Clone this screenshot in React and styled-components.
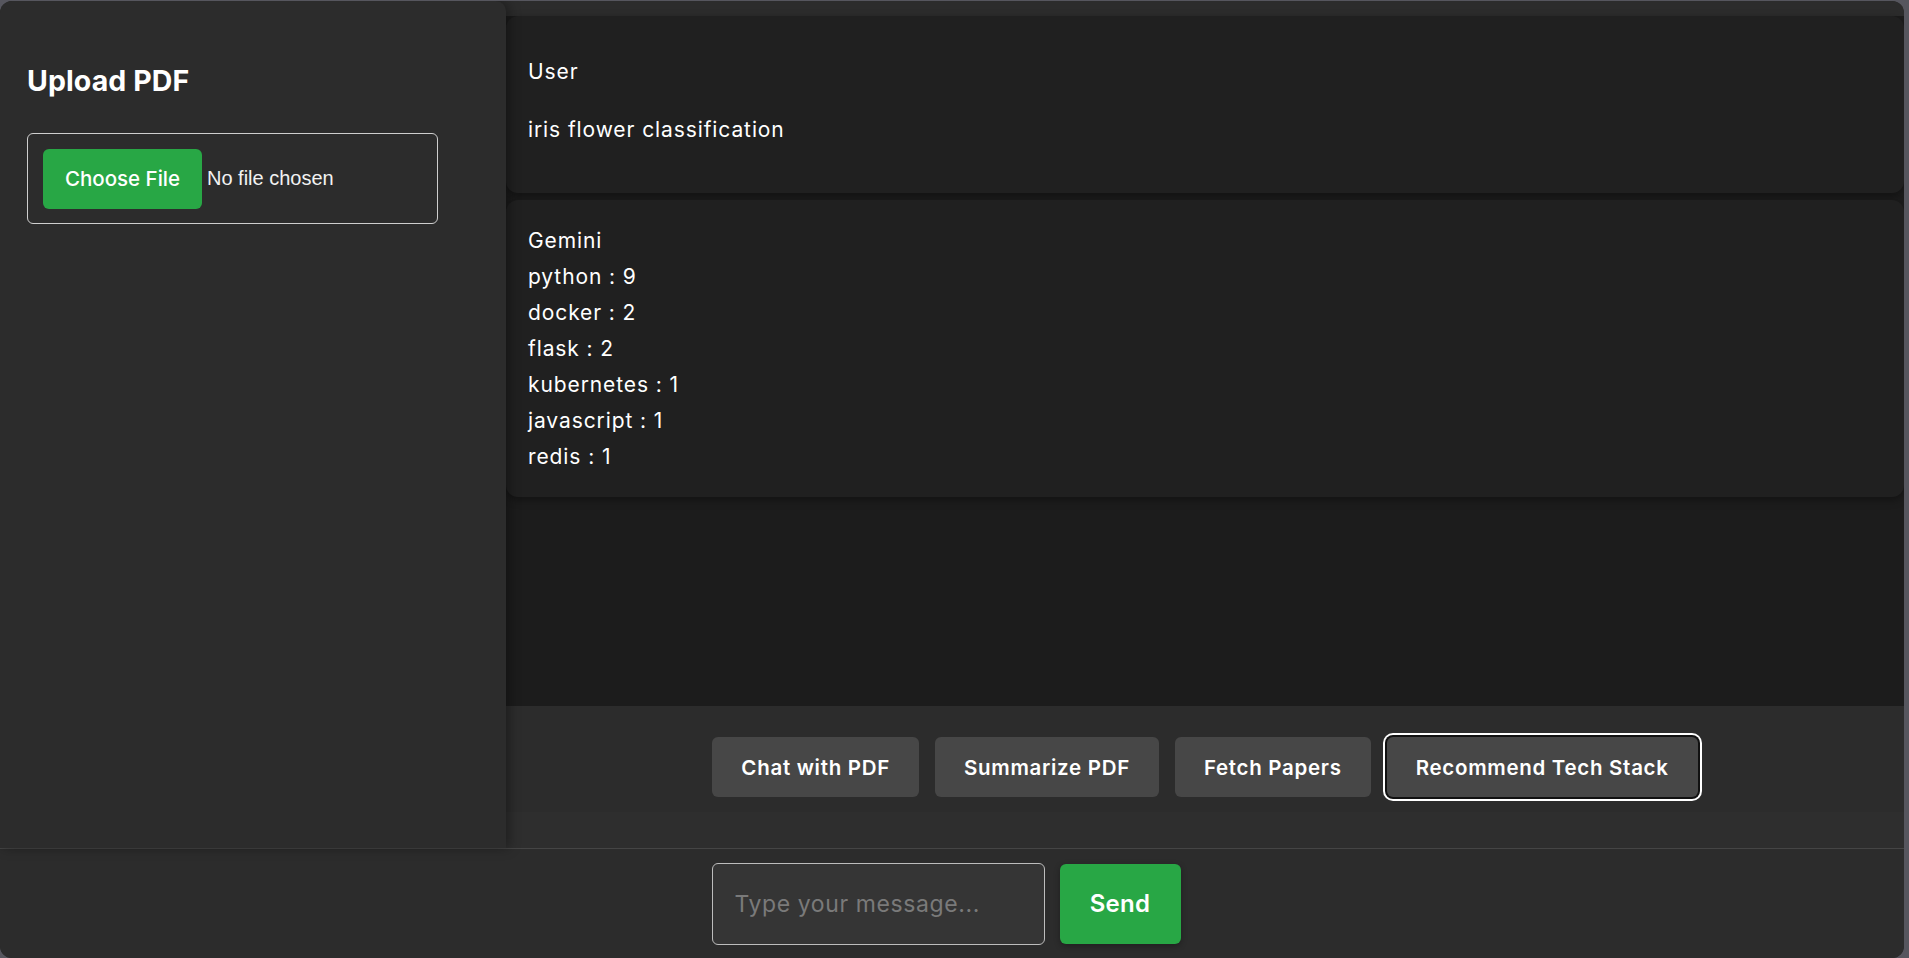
import React from 'react';
import styled, {createGlobalStyle} from 'styled-components';

const GlobalStyle = createGlobalStyle`
  html, body {
    margin: 0;
    padding: 0;
    background: #56565e;
  }
  body {
    font-family: 'Inter', 'Noto Sans', sans-serif;
    color: #fff;
  }
  * { box-sizing: border-box; }
`;

const Frame = styled.div`
  width: 1904px;
  height: 957px;
  margin-top: 1px;
  background: #2c2c2c;
  border-radius: 12px;
  overflow: hidden;
  display: flex;
  flex-direction: column;
`;

const Top = styled.div`
  flex: 1;
  display: flex;
  min-height: 0;
`;

const Sidebar = styled.aside`
  width: 506px;
  flex-shrink: 0;
  background: #2c2c2c;
  padding: 63px 27px;
  box-shadow: 3px 0 12px rgba(0, 0, 0, 0.35);
  border-top-right-radius: 10px;
  position: relative;
  z-index: 1;
`;

const Heading = styled.h2`
  margin: 0 0 35px;
  font-size: 28.5px;
  line-height: 34px;
  font-weight: 700;
  letter-spacing: 0.1px;
`;

const FileBox = styled.div`
  width: 411px;
  height: 91px;
  border: 1px solid #cfcfcf;
  border-radius: 6px;
  padding: 15px;
  display: flex;
  align-items: center;
  gap: 5px;
`;

const ChooseButton = styled.button`
  height: 60px;
  width: 159px;
  border: none;
  border-radius: 6px;
  background: #28a745;
  color: #fff;
  font-family: 'Inter', sans-serif;
  font-size: 20.5px;
  font-weight: 500;
`;

const FileName = styled.span`
  font-family: 'Liberation Sans', Arial, sans-serif;
  font-size: 20px;
  color: #f2f2f2;
`;

const Main = styled.main`
  flex: 1;
  display: flex;
  flex-direction: column;
  padding-top: 15px;
  background: #2c2c2c;
`;

const ChatArea = styled.section`
  height: 690px;
  background: #1c1c1c;
  display: flex;
  flex-direction: column;
  gap: 7px;
`;

const Card = styled.div`
  background: #202020;
  border-radius: 12px;
  box-shadow: 0 3px 8px rgba(0, 0, 0, 0.35);
  padding: ${p => p.$pad};
  font-size: 21px;
  letter-spacing: 0.9px;
  line-height: 36px;
`;

const Line = styled.div`
  margin-top: ${p => p.$gap || 0}px;
`;

const ActionBar = styled.div`
  height: 106px;
  background: #2c2c2c;
  display: flex;
  align-items: center;
  justify-content: center;
  gap: 16px;
  padding: 16px 0 0 0;
`;

const ActionButton = styled.button`
  height: 60px;
  padding: 0 29px;
  border: none;
  border-radius: 6px;
  background: #474747;
  color: #fff;
  font-family: 'Inter', sans-serif;
  font-size: 20.5px;
  letter-spacing: 0.7px;
  font-weight: 600;
  box-shadow: ${p => (p.$active ? '0 0 0 2px #111, 0 0 0 4px #fff' : 'none')};
`;

const Filler = styled.div`
  flex: 1;
  background: #2e2e2e;
`;

const InputBar = styled.footer`
  height: 110px;
  flex-shrink: 0;
  border-top: 1px solid #454545;
  background: #2c2c2c;
  display: flex;
  align-items: center;
  justify-content: center;
  gap: 15px;
  padding-right: 12px;
`;

const MessageInput = styled.input`
  width: 333px;
  height: 82px;
  background: #353535;
  border: 1px solid #bdbdbd;
  border-radius: 6px;
  padding: 0 22px;
  color: #fff;
  font-family: 'Inter', sans-serif;
  font-size: 23px;
  letter-spacing: 0.6px;
  outline: none;
  &::placeholder { color: #7a7a7a; }
`;

const SendButton = styled.button`
  width: 121px;
  height: 80px;
  border: none;
  border-radius: 6px;
  background: #28a745;
  color: #fff;
  font-family: 'Inter', sans-serif;
  font-size: 24px;
  font-weight: 600;
  letter-spacing: 0.3px;
  box-shadow: 0 2px 6px rgba(0, 0, 0, 0.3);
`;

const stack = [
  'python : 9',
  'docker : 2',
  'flask : 2',
  'kubernetes : 1',
  'javascript : 1',
  'redis : 1',
];

export default function App() {
  return (
    <>
      <GlobalStyle />
      <Frame>
        <Top>
          <Sidebar>
            <Heading>Upload PDF</Heading>
            <FileBox>
              <ChooseButton>Choose File</ChooseButton>
              <FileName>No file chosen</FileName>
            </FileBox>
          </Sidebar>
          <Main>
            <ChatArea>
              <Card $pad="38px 22px 45px">
                <Line>User</Line>
                <Line $gap={22}>iris flower classification</Line>
              </Card>
              <Card $pad="23px 22px 22px">
                <Line>Gemini</Line>
                {stack.map(s => <Line key={s}>{s}</Line>)}
              </Card>
            </ChatArea>
            <ActionBar>
              <ActionButton>Chat with PDF</ActionButton>
              <ActionButton>Summarize PDF</ActionButton>
              <ActionButton>Fetch Papers</ActionButton>
              <ActionButton $active>Recommend Tech Stack</ActionButton>
            </ActionBar>
            <Filler />
          </Main>
        </Top>
        <InputBar>
          <MessageInput placeholder="Type your message..." />
          <SendButton>Send</SendButton>
        </InputBar>
      </Frame>
    </>
  );
}
